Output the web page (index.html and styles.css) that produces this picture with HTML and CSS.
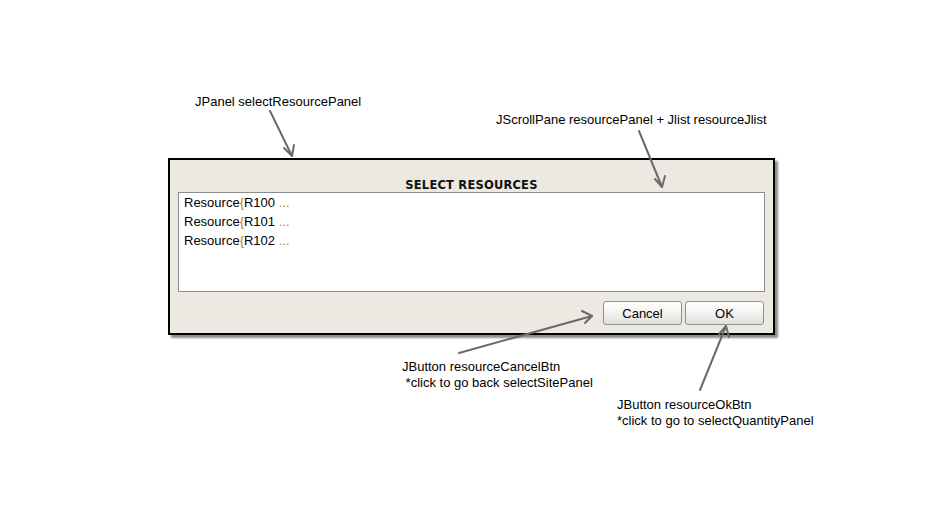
FILE: index.html
```html
<!DOCTYPE html>
<html>
<head>
<meta charset="utf-8">
<link rel="stylesheet" href="styles.css">
</head>
<body>
<div class="canvas">
  <div class="panel">
    <div class="panel-title">SELECT RESOURCES</div>
    <div class="list">
      <div class="item">Resource<span class="hl">{</span>R100 <span class="hl">...</span></div>
      <div class="item">Resource<span class="hl">{</span>R101 <span class="hl">...</span></div>
      <div class="item">Resource<span class="hl">{</span>R102 <span class="hl">...</span></div>
    </div>
    <div class="buttons">
      <button class="btn">Cancel</button>
      <button class="btn">OK</button>
    </div>
  </div>

  <div class="note note-panel">JPanel selectResourcePanel</div>
  <div class="note note-scroll">JScrollPane resourcePanel + Jlist resourceJlist</div>
  <div class="note note-cancel">JButton resourceCancelBtn<br>&nbsp;*click to go back selectSitePanel</div>
  <div class="note note-ok">JButton resourceOkBtn<br>*click to go to selectQuantityPanel</div>

  <svg class="arrows" width="945" height="519" viewBox="0 0 945 519">
    <g stroke="#6a6a6a" stroke-width="2" fill="none" stroke-linecap="round" stroke-linejoin="round">
      <line x1="270" y1="111" x2="292" y2="156"/>
      <polyline points="284,148 292,156 294,145"/>
      <line x1="639" y1="131" x2="662" y2="187"/>
      <polyline points="655,179 662,187 665,176"/>
      <line x1="459" y1="353" x2="592" y2="316"/>
      <polyline points="582,311 592,316 585,323"/>
      <line x1="700" y1="390" x2="726" y2="326"/>
      <polyline points="719,334 726,326 729,337"/>
    </g>
  </svg>
</div>
</body>
</html>
```
FILE: styles.css
```css
html, body {
  margin: 0;
  padding: 0;
  background: #ffffff;
}
.canvas {
  position: relative;
  width: 945px;
  height: 519px;
  overflow: hidden;
  padding: 158px 0 0 168px;
  box-sizing: border-box;
  font-family: "Liberation Sans", Arial, sans-serif;
}
.panel {
  width: 607px;
  height: 177px;
  box-sizing: border-box;
  border: 2px solid #000;
  background: #ece9e3;
  box-shadow: 3px 3px 2px rgba(0, 0, 0, 0.45);
  padding: 0 8px 0 8px;
  display: flex;
  flex-direction: column;
}
.panel-title {
  height: 32px;
  box-sizing: border-box;
  padding-top: 18px;
  line-height: 14px;
  text-align: center;
  font-family: "DejaVu Sans", sans-serif;
  font-weight: bold;
  font-size: 11.5px;
  color: #111;
  letter-spacing: 0.2px;
}
.list {
  height: 100px;
  box-sizing: border-box;
  border: 1px solid #8a8d92;
  background: #fff;
  padding: 0 5px;
}
.item {
  height: 19px;
  line-height: 19px;
  font-size: 13px;
  color: #000;
}
.hl {
  color: #c88000;
}
.buttons {
  display: flex;
  justify-content: flex-end;
  gap: 3px;
  padding: 9px 1px 0 0;
}
.btn {
  width: 79px;
  height: 24px;
  margin: 0;
  padding: 0;
  border: 1px solid #8e8f8f;
  border-radius: 3px;
  background: linear-gradient(#ffffff 0%, #f4f4f2 45%, #e0e0dc 100%);
  font-family: "Liberation Sans", Arial, sans-serif;
  font-size: 13px;
  color: #000;
}
.note {
  position: absolute;
  font-size: 13px;
  line-height: 16px;
  color: #000;
  white-space: nowrap;
}
.note-panel { left: 195px; top: 94px; }
.note-scroll { left: 496px; top: 112px; }
.note-cancel { left: 402px; top: 359px; }
.note-ok { left: 617px; top: 397px; }
.arrows {
  position: absolute;
  left: 0;
  top: 0;
  pointer-events: none;
}
```
